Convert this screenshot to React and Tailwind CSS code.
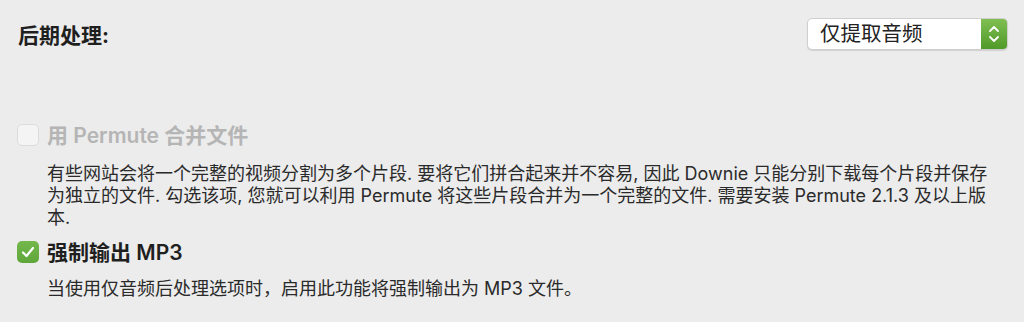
import React from "react";

const font = { fontFamily: 'Inter, "Noto Sans CJK SC", sans-serif' };

function Check({ checked, disabled }) {
  if (checked) {
    return (
      <div className="w-[22px] h-[22px] rounded-[5px] bg-gradient-to-b from-[#74b84c] to-[#5fa63a] flex items-center justify-center shrink-0">
        <svg width="14" height="12" viewBox="0 0 14 12" fill="none">
          <path d="M2 6.5 L5.5 10 L12 2" stroke="white" strokeWidth="2.2" strokeLinecap="round" strokeLinejoin="round" />
        </svg>
      </div>
    );
  }
  return (
    <div className={`w-[22px] h-[22px] rounded-[5px] border shrink-0 ${disabled ? "bg-[#f4f4f4] border-[#dcdcdc]" : "bg-white border-[#b8b8b8]"}`} />
  );
}

export default function App() {
  return (
    <div className="w-[1024px] h-[322px] bg-[#ececec] overflow-hidden pl-[17px] pr-[16px] pt-[18px]" style={font}>
      <div className="flex items-center justify-between h-[32px]">
        <div className="text-[21px] font-bold text-[#1f1f1f] pl-[1px] leading-none mt-[3px]">后期处理:</div>
        <div className="w-[201px] h-[32px] flex rounded-[5px] bg-white border border-[#cfcfcf] shadow-[0_1px_1px_rgba(0,0,0,0.12)] overflow-hidden">
          <div className="flex-1 flex items-center pl-[12px] text-[20.5px] text-[#222] leading-none">仅提取音频</div>
          <div className="w-[26px] h-full bg-gradient-to-b from-[#80bf52] to-[#4f9a28] flex items-center justify-center">
            <svg width="12" height="20" viewBox="0 0 12 20" fill="none">
              <path d="M2 7 L6 3 L10 7" stroke="white" strokeWidth="1.8" strokeLinecap="round" strokeLinejoin="round" />
              <path d="M2 13 L6 17 L10 13" stroke="white" strokeWidth="1.8" strokeLinecap="round" strokeLinejoin="round" />
            </svg>
          </div>
        </div>
      </div>

      <div className="mt-[74px] flex items-center gap-[8px] h-[22px]">
        <Check disabled />
        <div className="text-[21px] font-semibold text-[#b5b5b5] leading-none">用 Permute 合并文件</div>
      </div>
      <div className="mt-[17px] pl-[30px] text-[18px] leading-[22px] text-[#2a2a2a]">
        有些网站会将一个完整的视频分割为多个片段. 要将它们拼合起来并不容易, 因此 Downie 只能分别下载每个片段并保存<br />
        为独立的文件. 勾选该项, 您就可以利用 Permute 将这些片段合并为一个完整的文件. 需要安装 Permute 2.1.3 及以上版<br />
        本.
      </div>

      <div className="mt-[12px] flex items-center gap-[8px] h-[22px]">
        <Check checked />
        <div className="text-[21px] font-semibold text-[#1f1f1f] leading-none">强制输出 MP3</div>
      </div>
      <div className="mt-[15px] pl-[30px] text-[18px] leading-[22px] text-[#2a2a2a]">
        当使用仅音频后处理选项时，启用此功能将强制输出为 MP3 文件。
      </div>
    </div>
  );
}
